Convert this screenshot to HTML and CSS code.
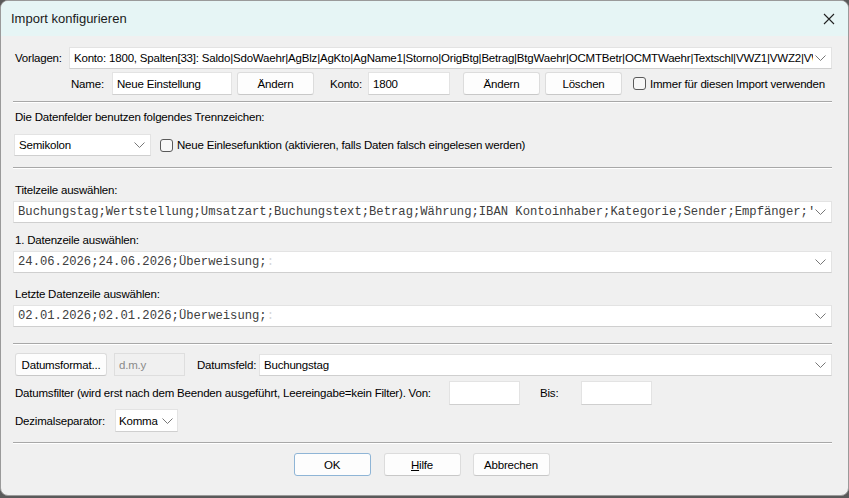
FILE: index.html
```html
<!DOCTYPE html>
<html>

<head>
  <title>Import konfigurieren</title>
  <link rel="stylesheet" href="styles.css">
</head>

<body>
  <div class="window">
    <div class="titlebar">
      <span class="title">Import konfigurieren</span>
      <span class="close">
        <svg width="12" height="12" viewBox="0 0 12 12"><path d="M1 1 L11 11 M11 1 L1 11" stroke="#222" stroke-width="1.1" fill="none"/></svg>
      </span>
    </div>

    <div class="content">
      <!-- Vorlagen -->
      <div class="row row-vorlagen">
        <span class="lbl">Vorlagen:</span>
        <div class="combo combo-vorlagen">
          <span class="combo-text">Konto: 1800, Spalten[33]: Saldo|SdoWaehr|AgBlz|AgKto|AgName1|Storno|OrigBtg|Betrag|BtgWaehr|OCMTBetr|OCMTWaehr|Textschl|VWZ1|VWZ2|VWZ3|VWZ4</span>
          <svg class="chev" width="11" height="6" viewBox="0 0 11 6"><path d="M0.5 0.5 L5.5 5.5 L10.5 0.5" stroke="#777" fill="none"/></svg>
        </div>
      </div>

      <div class="row row-name">
        <span class="lbl lbl-name">Name:</span>
        <div class="input input-name">Neue Einstellung</div>
        <div class="btn btn-aendern1">Ändern</div>
        <span class="lbl lbl-konto">Konto:</span>
        <div class="input input-konto">1800</div>
        <div class="btn btn-aendern2">Ändern</div>
        <div class="btn btn-loeschen">Löschen</div>
        <span class="check check-immer"></span>
        <span class="lbl">Immer für diesen Import verwenden</span>
      </div>

      <div class="sep sep-1"></div>

      <div class="caption caption-trenn">Die Datenfelder benutzen folgendes Trennzeichen:</div>
      <div class="row row-trenn">
        <div class="combo combo-semikolon">
          <span class="combo-text">Semikolon</span>
          <svg class="chev" width="11" height="6" viewBox="0 0 11 6"><path d="M0.5 0.5 L5.5 5.5 L10.5 0.5" stroke="#777" fill="none"/></svg>
        </div>
        <span class="check check-neu"></span>
        <span class="lbl">Neue Einlesefunktion (aktivieren, falls Daten falsch eingelesen werden)</span>
      </div>

      <div class="sep sep-2"></div>

      <div class="caption caption-titel">Titelzeile auswählen:</div>
      <div class="combo combo-line">
        <span class="combo-text mono">Buchungstag;Wertstellung;Umsatzart;Buchungstext;Betrag;Währung;IBAN Kontoinhaber;Kategorie;Sender;Empfänger;'Verwendungszweck'</span>
        <svg class="chev" width="11" height="6" viewBox="0 0 11 6"><path d="M0.5 0.5 L5.5 5.5 L10.5 0.5" stroke="#777" fill="none"/></svg>
      </div>

      <div class="caption caption-first">1. Datenzeile auswählen:</div>
      <div class="combo combo-line">
        <span class="combo-text mono">24.06.2026;24.06.2026;Überweisung;<span class="faint">:</span></span>
        <svg class="chev" width="11" height="6" viewBox="0 0 11 6"><path d="M0.5 0.5 L5.5 5.5 L10.5 0.5" stroke="#777" fill="none"/></svg>
      </div>

      <div class="caption caption-last">Letzte Datenzeile auswählen:</div>
      <div class="combo combo-line">
        <span class="combo-text mono">02.01.2026;02.01.2026;Überweisung;<span class="faint">:</span></span>
        <svg class="chev" width="11" height="6" viewBox="0 0 11 6"><path d="M0.5 0.5 L5.5 5.5 L10.5 0.5" stroke="#777" fill="none"/></svg>
      </div>

      <div class="sep sep-3"></div>

      <div class="row row-datum">
        <div class="btn btn-datumsformat">Datumsformat...</div>
        <div class="input input-disabled">d.m.y</div>
        <span class="lbl lbl-datumsfeld">Datumsfeld:</span>
        <div class="combo combo-datumsfeld">
          <span class="combo-text">Buchungstag</span>
          <svg class="chev" width="11" height="6" viewBox="0 0 11 6"><path d="M0.5 0.5 L5.5 5.5 L10.5 0.5" stroke="#777" fill="none"/></svg>
        </div>
      </div>

      <div class="row row-filter">
        <span class="lbl lbl-filter">Datumsfilter (wird erst nach dem Beenden ausgeführt, Leereingabe=kein Filter). Von:</span>
        <div class="input input-von"></div>
        <span class="lbl lbl-bis">Bis:</span>
        <div class="input input-bis"></div>
      </div>

      <div class="row row-dezimal">
        <span class="lbl">Dezimalseparator:</span>
        <div class="combo combo-komma">
          <span class="combo-text">Komma</span>
          <svg class="chev" width="11" height="6" viewBox="0 0 11 6"><path d="M0.5 0.5 L5.5 5.5 L10.5 0.5" stroke="#777" fill="none"/></svg>
        </div>
      </div>

      <div class="sep sep-4"></div>

      <div class="row row-buttons">
        <div class="btn btn-ok">OK</div>
        <div class="btn btn-hilfe"><u>H</u>ilfe</div>
        <div class="btn btn-abbrechen">Abbrechen</div>
      </div>
    </div>
  </div>
</body>

</html>
```

FILE: styles.css
```css
html {
  background-color: #5a5a5a;
}

body {
  margin: 0;
  font-family: "Liberation Sans", Arial, sans-serif;
  font-size: 11.5px;
  letter-spacing: -0.2px;
  color: #000;
}

.window {
  width: 847px;
  height: 494px;
  background-color: #f0f0f0;
  border: 1px solid #9a9a9a;
  border-radius: 8px;
  overflow: hidden;
}

.titlebar {
  height: 35px;
  background-color: #e6f5f5;
  display: flex;
  align-items: center;
  justify-content: space-between;
  padding: 0 13px 0 10px;
}

.title {
  font-size: 13px;
  letter-spacing: 0;
  color: #1a1a1a;
}

.close {
  display: flex;
  margin-top: 1px;
}

.content {
  padding: 0 16px 0 12px;
}

.row {
  display: flex;
  align-items: center;
}

.lbl {
  white-space: nowrap;
  line-height: 14px;
}

/* controls */
.combo,
.input {
  box-sizing: border-box;
  background-color: #fff;
  border: 1px solid #e3e3e3;
  border-bottom-color: #cfcfcf;
  display: flex;
  align-items: center;
}

.combo {
  height: 22px;
  padding: 0 5px 0 4px;
  justify-content: space-between;
  overflow: hidden;
}

.combo-text {
  white-space: nowrap;
  overflow: hidden;
  flex: 1;
}

.chev {
  flex-shrink: 0;
  margin-left: 2px;
}

.input {
  height: 23px;
  padding: 0 4px;
}

.btn {
  box-sizing: border-box;
  height: 23px;
  width: 77px;
  background-color: #fdfdfd;
  border: 1px solid #dcdcdc;
  border-bottom-color: #c8c8c8;
  border-radius: 3px;
  display: flex;
  align-items: center;
  justify-content: center;
}

.check {
  box-sizing: border-box;
  width: 13px;
  height: 13px;
  border: 1px solid #5a5a5a;
  border-radius: 3px;
  background-color: #f7f7f7;
  flex-shrink: 0;
}

.sep {
  border-top: 1px solid #a8a8a8;
  border-bottom: 1px solid #fff;
}

.caption {
  line-height: 14px;
  padding-left: 2px;
}

.mono {
  font-family: "Liberation Mono", "Courier New", monospace;
  font-size: 12.2px;
  letter-spacing: 0;
  color: #404040;
}

.faint {
  color: #d8d8d8;
}

/* Vorlagen */
.row-vorlagen {
  margin-top: 11px;
}

.row-vorlagen .lbl {
  padding-left: 2px;
  width: 54px;
}

.combo-vorlagen {
  flex: 1;
  height: 22px;
}

.row-name {
  margin-top: 3px;
}

.lbl-name {
  margin-left: 58px;
  width: 41px;
}

.input-name {
  width: 120px;
}

.btn-aendern1 {
  margin-left: 5px;
}

.lbl-konto {
  margin-left: 16px;
  width: 38px;
}

.input-konto {
  width: 82px;
}

.btn-aendern2 {
  margin-left: 13px;
}

.btn-loeschen {
  margin-left: 5px;
}

.check-immer {
  margin-left: 11px;
  margin-right: 4px;
}

.sep-1 {
  margin-top: 6px;
}

/* Trennzeichen */
.caption-trenn {
  margin-top: 7px;
}

.row-trenn {
  margin-top: 10px;
}

.combo-semikolon {
  width: 137px;
  margin-left: 1px;
}

.check-neu {
  margin-left: 9px;
  margin-right: 4px;
}

.sep-2 {
  margin-top: 11px;
}

/* Zeilen */
.caption-titel {
  margin-top: 14px;
}

.combo-line {
  margin-top: 4px;
  padding-left: 4px;
}

.caption-first {
  margin-top: 10px;
}

.caption-last {
  margin-top: 14px;
}

.sep-3 {
  margin-top: 16px;
}

/* Datum */
.row-datum {
  margin-top: 8px;
}

.btn-datumsformat {
  width: 92px;
  margin-left: 2px;
}

.input-disabled {
  width: 71px;
  margin-left: 7px;
  background-color: #f0f0f0;
  border-color: #dedede;
  color: #8a8a8a;
}

.lbl-datumsfeld {
  margin-left: 12px;
  width: 62px;
}

.combo-datumsfeld {
  flex: 1;
}

.row-filter {
  margin-top: 5px;
  padding-left: 2px;
}

.lbl-filter {
  width: 434px;
}

.input-von {
  width: 71px;
  height: 24px;
}

.lbl-bis {
  margin-left: 20px;
  width: 41px;
}

.input-bis {
  width: 71px;
  height: 24px;
}

.row-dezimal {
  margin-top: 4px;
  padding-left: 2px;
}

.row-dezimal .lbl {
  width: 100px;
}

.combo-komma {
  width: 63px;
  height: 23px;
  padding-left: 3px;
  padding-right: 4px;
}

.combo-komma .chev {
  margin-left: 4px;
}

.sep-4 {
  margin-top: 10px;
}

/* Buttons */
.row-buttons {
  justify-content: center;
  margin-top: 9px;
  margin-left: -2px;
}

.btn-ok {
  border-color: #8fb5d6;
}

.btn-hilfe {
  margin-left: 13px;
}

.btn-abbrechen {
  margin-left: 12px;
}
```
